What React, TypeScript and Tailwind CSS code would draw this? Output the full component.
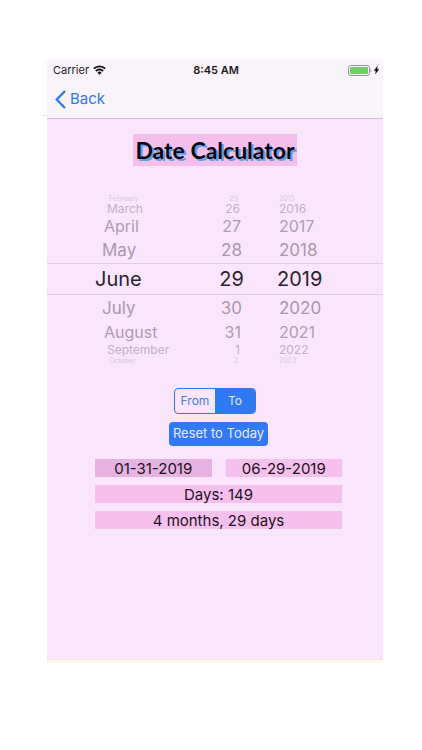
import { useState } from "react";
import clsx from "clsx";

const MONTHS = [
  "January", "February", "March", "April", "May", "June",
  "July", "August", "September", "October", "November", "December",
];

// Height and text style for each row of the wheel, by distance from the centre
const ROW_STYLES = [
  "h-8 border-y border-[#dccde0] text-[20px] text-[#2b222d]",
  "h-[26px] text-[17px] text-[#a898ab]",
  "h-[22px] text-[16px] text-[#ad9db1]",
  "h-[13px] text-[12px] text-[#c1afc5]",
  "h-2 text-[7px] text-[#dac6de]",
];

const MONTH_INDENTS = ["pl-12", "pl-[55px]", "pl-[57px]", "pl-[60px]", "pl-[62px]"];
const DAY_INDENTS = ["pr-2", "pr-[10px]", "pr-[11px]", "pr-3", "pr-[14px]"];
const YEAR_INDENTS = ["pl-[25px]", "pl-[27px]", "pl-[27px]", "pl-[27px]", "pl-[27px]"];

const OFFSETS = [-4, -3, -2, -1, 0, 1, 2, 3, 4];

type Mode = "from" | "to";

function daysInMonth(year: number, month: number) {
  return new Date(year, month + 1, 0).getDate();
}

function makeDate(year: number, month: number, day: number) {
  return new Date(year, month, Math.min(day, daysInMonth(year, month)));
}

function formatDate(date: Date) {
  const mm = String(date.getMonth() + 1).padStart(2, "0");
  const dd = String(date.getDate()).padStart(2, "0");
  return `${mm}-${dd}-${date.getFullYear()}`;
}

function daysBetween(a: Date, b: Date) {
  return Math.round(Math.abs(b.getTime() - a.getTime()) / 86400000);
}

function monthsAndDays(a: Date, b: Date) {
  const [start, end] = a <= b ? [a, b] : [b, a];
  const addMonths = (n: number) => {
    const first = new Date(start.getFullYear(), start.getMonth() + n, 1);
    return makeDate(first.getFullYear(), first.getMonth(), start.getDate());
  };
  let months = (end.getFullYear() - start.getFullYear()) * 12 + end.getMonth() - start.getMonth();
  if (addMonths(months) > end) months--;
  return `${months} months, ${daysBetween(addMonths(months), end)} days`;
}

interface WheelProps {
  label: string;
  indents: string[];
  align?: string;
  getText: (offset: number) => string;
  onPick: (offset: number) => void;
}

function Wheel({ label, indents, align = "justify-start", getText, onPick }: WheelProps) {
  return (
    <div role="group" aria-label={label} className="flex flex-col min-w-0">
      {OFFSETS.map(offset => {
        const distance = Math.abs(offset);
        return (
          <button
            key={offset}
            type="button"
            onClick={() => onPick(offset)}
            className={clsx(
              "flex items-center leading-none whitespace-nowrap",
              align,
              ROW_STYLES[distance],
              indents[distance]
            )}
          >
            {getText(offset)}
          </button>
        );
      })}
    </div>
  );
}

function StatusBar() {
  return (
    <div className="grid grid-cols-3 items-center h-5 pl-[6px] pr-1 text-[11px] text-[#1b191c]">
      <div className="flex items-center gap-1">
        <span>Carrier</span>
        <svg width="13" height="10" viewBox="0 0 13 10" fill="none" stroke="#111" strokeWidth="1.8" aria-hidden="true">
          <path d="M0.8 3.7a8.1 8.1 0 0 1 11.4 0" />
          <path d="M2.9 6a5.1 5.1 0 0 1 7.2 0" />
          <path d="M6.5 9.8 4.4 7.7a2.9 2.9 0 0 1 4.2 0z" fill="#111" stroke="none" />
        </svg>
      </div>
      <span className="text-center font-semibold">8:45 AM</span>
      <div className="flex items-center justify-end gap-[2px]">
        <svg width="24" height="11" viewBox="0 0 24 11" aria-hidden="true">
          <rect x="0.5" y="0.5" width="21" height="10" rx="2.4" fill="#fbf8fb" stroke="#99949a" />
          <rect x="2" y="2" width="18" height="7" rx="1" fill="#6fce67" />
          <path d="M22.5 3.7c1.3.5 1.3 3.1 0 3.6z" fill="#99949a" />
        </svg>
        <svg width="5" height="8" viewBox="0 0 5 8" aria-hidden="true">
          <path d="M3.5 0 0 4.7h2L1.4 8 5 3.2H2.9z" fill="#111" stroke="#111" strokeWidth="0.3" />
        </svg>
      </div>
    </div>
  );
}

function Result({ children, active }: { children: React.ReactNode; active?: boolean }) {
  return (
    <output
      className={clsx(
        "flex w-full items-center justify-center h-[18px] text-[15px] leading-none text-[#1c121d]",
        active ? "bg-[#e6b2e2]" : "bg-[#f5c0ee]"
      )}
    >
      {children}
    </output>
  );
}

export default function App() {
  const [mode, setMode] = useState<Mode>("to");
  const [from, setFrom] = useState(new Date(2019, 0, 31));
  const [to, setTo] = useState(new Date(2019, 5, 29));

  const current = mode === "from" ? from : to;
  const setCurrent = mode === "from" ? setFrom : setTo;
  const year = current.getFullYear();
  const month = current.getMonth();
  const day = current.getDate();

  const monthAt = (offset: number) => (month + offset + 12) % 12;
  // The day wheel always runs 1 to 31, whatever the month
  const dayAt = (offset: number) => ((day - 1 + offset + 31) % 31) + 1;

  const resetToToday = () => {
    const now = new Date();
    setCurrent(makeDate(now.getFullYear(), now.getMonth(), now.getDate()));
  };

  return (
    <div className="min-h-screen bg-white pt-[58px] pb-20 pl-[42px] pr-[39px] font-['Inter','Liberation_Sans',sans-serif]">
      <div className="flex items-start">
        <div className="w-[5px] h-[58px] bg-[#fdfbfd] border-b border-[#e6e3e6]" />
        <header className="flex-1 h-[61px] bg-[#f9f4f9] border-t-2 border-t-[#fcfafc] border-b border-b-[#cfc5d0]">
          <StatusBar />
          <a href="#" className="mt-1 inline-flex items-center gap-1 pl-2 h-[30px] text-[15px] text-[#3079e8]">
            <svg width="11" height="19" viewBox="0 0 11 19" fill="none" stroke="currentColor" strokeWidth="2.4" aria-hidden="true">
              <path d="M10 1 1.8 9.5 10 18" />
            </svg>
            Back
          </a>
        </header>
      </div>

      <main className="ml-[5px] flex flex-col bg-[#fbe5fd] pt-[15px] pb-[131px]">
        <h1 className="self-center flex items-center h-8 px-[2px] bg-[#f5bfed] font-['Lato',sans-serif] text-[23px] leading-none font-bold text-[#0b0710] [text-shadow:2px_2px_0_#5aa2ea]">
          Date Calculator
        </h1>

        <div className="mt-7 grid grid-cols-[43%_18%_1fr]">
          <Wheel
            label="Month"
            indents={MONTH_INDENTS}
            getText={offset => MONTHS[monthAt(offset)]}
            onPick={offset => setCurrent(makeDate(year, monthAt(offset), day))}
          />
          <Wheel
            label="Day"
            align="justify-end"
            indents={DAY_INDENTS}
            getText={offset => String(dayAt(offset))}
            onPick={offset => setCurrent(makeDate(year, month, dayAt(offset)))}
          />
          <Wheel
            label="Year"
            indents={YEAR_INDENTS}
            getText={offset => String(year + offset)}
            onPick={offset => setCurrent(makeDate(year + offset, month, day))}
          />
        </div>

        <div className="mt-6 self-center flex w-[82px] h-[26px] rounded border border-[#3079f3] overflow-hidden text-[12px]">
          <button
            type="button"
            aria-pressed={mode === "from"}
            onClick={() => setMode("from")}
            className={clsx("flex-1", mode === "from" ? "bg-[#3079f3] text-[#e6e6fd]" : "text-[#3f7fee]")}
          >
            From
          </button>
          <button
            type="button"
            aria-pressed={mode === "to"}
            onClick={() => setMode("to")}
            className={clsx("flex-1", mode === "to" ? "bg-[#3079f3] text-[#e6e6fd]" : "text-[#3f7fee]")}
          >
            To
          </button>
        </div>

        <div className="mt-2 ml-12 mr-[41px] flex flex-col gap-2">
          <button
            type="button"
            onClick={resetToToday}
            className="mb-[5px] self-center h-6 px-1 rounded bg-[#3079f3] text-[13px] text-[#ebeafe]"
          >
            Reset to Today
          </button>
          <div className="flex gap-[14px]">
            <Result active>{formatDate(from)}</Result>
            <Result>{formatDate(to)}</Result>
          </div>
          <Result>Days: {daysBetween(from, to)}</Result>
          <Result>{monthsAndDays(from, to)}</Result>
        </div>
      </main>
      <div className="ml-[5px] mr-[2px] h-[3px] bg-[#fdf8e2]" />
    </div>
  );
}
